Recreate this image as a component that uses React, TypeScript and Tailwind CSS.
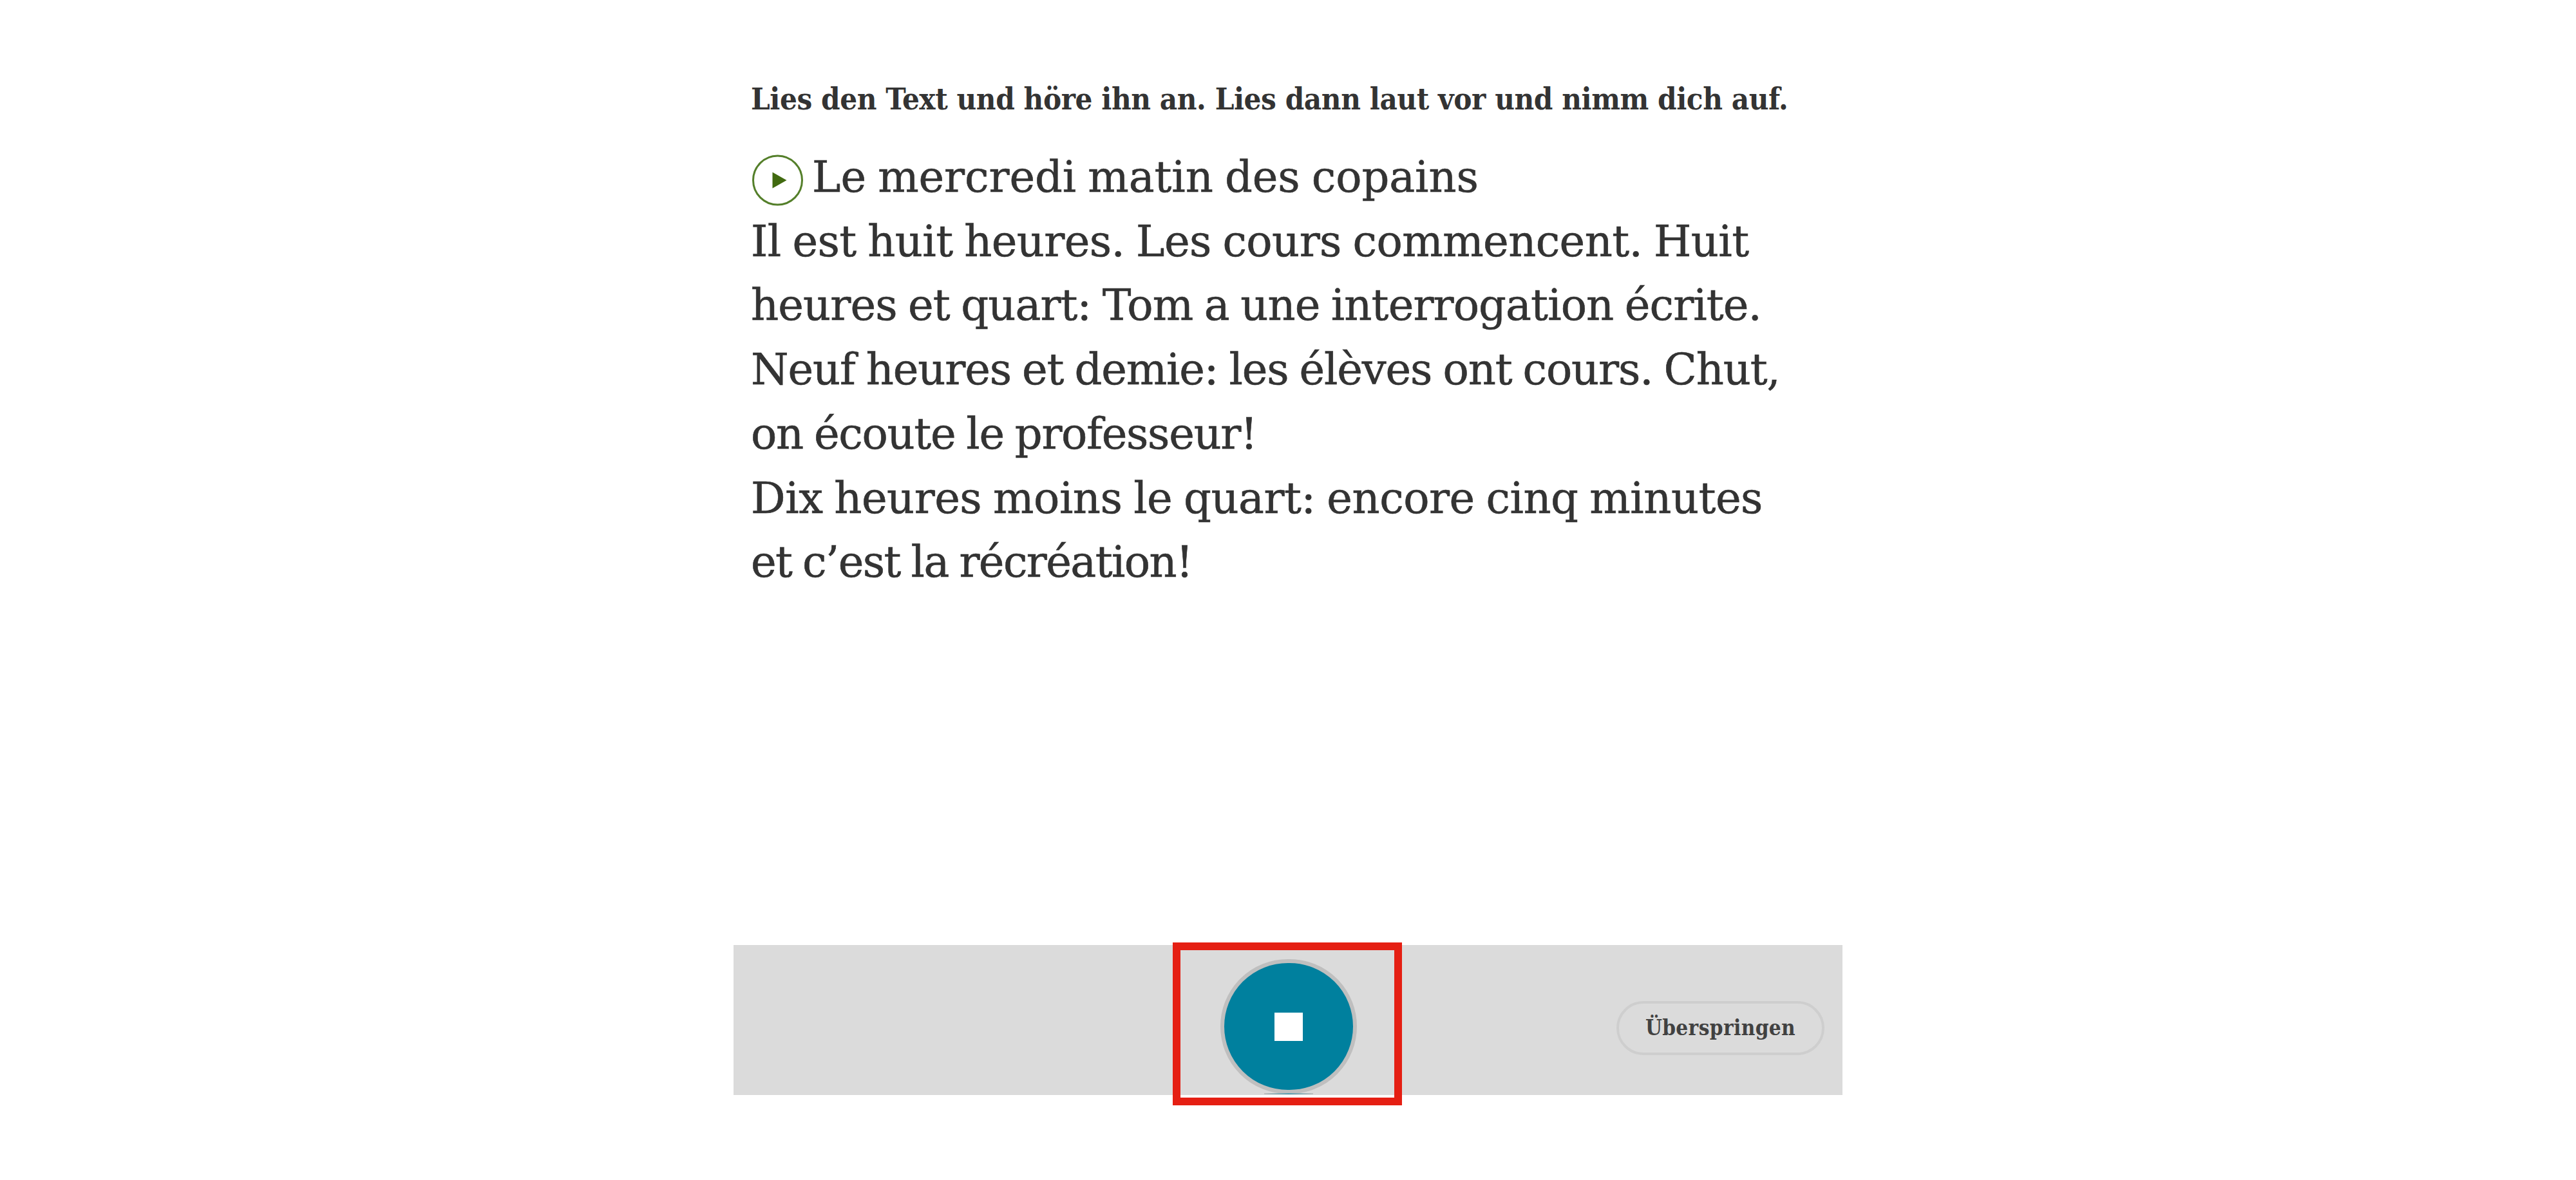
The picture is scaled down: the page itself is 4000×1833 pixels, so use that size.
const textLines = [
  { text: "Il est huit heures. Les cours commencent. Huit", tracking: "tracking-[-0.6px]" },
  { text: "heures et quart: Tom a une interrogation écrite.", tracking: "tracking-[-0.9px]" },
  { text: "Neuf heures et demie: les élèves ont cours. Chut,", tracking: "tracking-[-1.15px]" },
  { text: "on écoute le professeur!", tracking: "tracking-[-1.3px]" },
  { text: "Dix heures moins le quart: encore cinq minutes", tracking: "tracking-[-0.5px]" },
  { text: "et c’est la récréation!", tracking: "tracking-[-1.6px]" },
];

function PlayButton() {
  return (
    <button aria-label="Abspielen" className="mt-[14px] ml-px size-20 shrink-0">
      <svg viewBox="0 0 80 80" className="size-20">
        <circle cx="40.5" cy="40" r="38" fill="#fff" stroke="#547f2a" strokeWidth="3" />
        <path d="M32.5 27.5 54.5 40 32.5 52.5z" fill="#416a10" />
      </svg>
    </button>
  );
}

function StopButton() {
  return (
    <button
      aria-label="Aufnahme stoppen"
      className="relative flex h-[209px] w-[212px] items-center justify-center rounded-full border-6 border-[#bfbfbf] bg-[#00809e]"
    >
      <span className="size-11 bg-white" />
      <span className="absolute -bottom-[7px] h-[2px] w-[76px] bg-[linear-gradient(90deg,#bfbfbf,#5a9fb1,#bfbfbf)]" />
    </button>
  );
}

export default function App() {
  return (
    <main className="flex h-[1833px] w-[4000px] justify-center overflow-hidden bg-white text-[#333]">
      <section className="flex w-[1722px] flex-col">
        <article className="h-[1468px] shrink-0 pt-[124px] pl-[27px] whitespace-nowrap">
          <h1 className="font-['DejaVu_Serif_Condensed','DejaVu_Serif',serif] text-[47px] leading-[60px] font-bold tracking-[-0.43px]">
            Lies den Text und höre ihn an. Lies dann laut vor und nimm dich auf.
          </h1>
          <div className="mt-[42px] font-['DejaVu_Serif',serif] text-[67px] leading-[99.7px] [word-spacing:-3px] [-webkit-text-stroke:0.6px_#333]">
            <div className="flex h-[99.7px] gap-[14px]">
              <PlayButton />
              <p className="tracking-[-0.1px]">Le mercredi matin des copains</p>
            </div>
            {textLines.map((line) => (
              <p key={line.text} className={line.tracking}>
                {line.text}
              </p>
            ))}
          </div>
        </article>

        <footer className="grid h-[233px] shrink-0 grid-cols-[682px_356px_1fr] bg-[#dbdbdb]">
          <div className="relative z-10 col-start-2 -mt-1 flex h-[253px] justify-center border-12 border-[#e51f13] bg-[linear-gradient(#dbdbdb_225px,#fff_225px)] pt-[14px] pl-[3px]">
            <StopButton />
          </div>
          <div className="flex justify-end pt-[87px] pr-[28px]">
            <button className="flex h-[84px] w-[323px] items-center justify-center rounded-full border-4 border-[#cecece] font-['DejaVu_Serif_Condensed','DejaVu_Serif',serif] text-[33px] font-bold tracking-[0.4px] text-[#414141]">
              Überspringen
            </button>
          </div>
        </footer>
      </section>
    </main>
  );
}
